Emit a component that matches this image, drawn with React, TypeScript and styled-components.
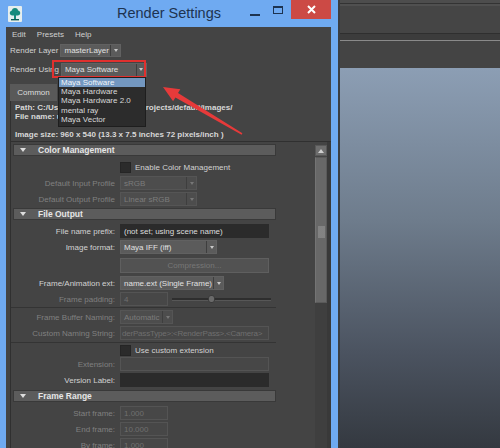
import React from "react";
import styled, { createGlobalStyle } from "styled-components";

const GlobalStyle = createGlobalStyle`
  html, body {
    margin: 0;
    padding: 0;
    background: #3b3f45;
  }
  body {
    font-family: "Liberation Sans", Arial, sans-serif;
  }
  * {
    box-sizing: border-box;
  }
`;

const Root = styled.div`
  position: relative;
  display: flex;
  width: 500px;
  height: 448px;
  overflow: hidden;
`;

/* ---------- window chrome ---------- */

const Window = styled.div`
  flex: none;
  width: 338px;
  display: flex;
  flex-direction: column;
  background: #6faaf1;
`;

const TitleBar = styled.div`
  height: 27px;
  flex: none;
  display: grid;
  grid-template-columns: 1fr auto 1fr;
  align-items: start;
`;

const AppIcon = styled.div`
  padding: 6px 0 0 8px;
  display: flex;
`;

const Title = styled.div`
  font-size: 14.5px;
  line-height: 26px;
  color: #1d3350;
  white-space: nowrap;
`;

const Controls = styled.div`
  display: flex;
  justify-content: flex-end;
  align-items: flex-start;
  padding-right: 7px;
`;

const MinBtn = styled.div`
  width: 10px;
  height: 2px;
  margin-top: 14px;
  background: #1d3350;
`;

const MaxBtn = styled.div`
  width: 10px;
  height: 8px;
  margin: 6px 0 0 13px;
  border: 1px solid #1d3350;
  border-top-width: 2px;
`;

const CloseBtn = styled.div`
  width: 40px;
  height: 19px;
  margin-left: 8px;
  background: #cc4a45;
  display: flex;
  align-items: center;
  justify-content: center;
`;

const Frame = styled.div`
  flex: 1;
  display: flex;
  padding: 0 7px 0 6px;
  min-height: 0;
`;

const Body = styled.div`
  position: relative;
  flex: 1;
  display: flex;
  flex-direction: column;
  background: #444444;
  font-size: 8px;
  color: #d2d2d2;
`;

const MenuBar = styled.div`
  height: 14px;
  flex: none;
  display: flex;
  align-items: center;
  gap: 11px;
  padding-left: 6px;
  color: #d0d0d0;
`;

const TopRow = styled.div<{ $h: number }>`
  position: relative;
  height: ${(p) => p.$h}px;
  flex: none;
  display: flex;
  align-items: center;
  gap: 2px;
  padding-left: 4px;
`;

const Highlight = styled.div`
  position: absolute;
  left: 46px;
  top: 1px;
  width: 94px;
  height: 18px;
  border: 2px solid #e0302e;
  pointer-events: none;
`;

const DropList = styled.div`
  position: absolute;
  left: 52px;
  top: 18px;
  width: 88px;
  padding: 0 0 2px;
  background: #2c2c2c;
  border: 1px solid #1e1e1e;
  z-index: 2;
`;

const DropItem = styled.div<{ $active?: boolean }>`
  height: 9.2px;
  line-height: 9.2px;
  padding-left: 2px;
  font-size: 8px;
  color: ${(p) => (p.$active ? "#f0f4f8" : "#d8d8d8")};
  background: ${(p) => (p.$active ? "#7397c0" : "transparent")};
  white-space: nowrap;
`;

const TabBar = styled.div`
  height: 21px;
  flex: none;
  display: flex;
  align-items: flex-end;
  padding-left: 4px;
`;

const Tab = styled.div`
  width: 47px;
  height: 17px;
  background: #595959;
  display: flex;
  align-items: center;
  justify-content: center;
  color: #dedede;
`;

const Info = styled.div`
  height: 40px;
  flex: none;
  margin-left: 4px;
  padding: 2px 0 0 4px;
  border-left: 1px solid #303030;
  font-weight: bold;
  color: #d8d8d8;
  white-space: nowrap;
`;

const InfoLine = styled.div<{ $gap?: number }>`
  line-height: 9px;
  margin-top: ${(p) => p.$gap ?? 0}px;
`;

/* ---------- scrolling attribute panel ---------- */

const ScrollPanel = styled.div`
  flex: 1;
  display: flex;
  margin-left: 4px;
  border-left: 1px solid #303030;
  border-top: 1px solid #303030;
  min-height: 0;
  overflow: hidden;
`;

const Content = styled.div`
  width: 265px;
  flex: none;
  padding: 2px 0 0 2px;
`;

const Spacer = styled.div`
  flex: 1;
`;

const Scrollbar = styled.div`
  width: 16px;
  flex: none;
  display: flex;
  flex-direction: column;
  padding-top: 3px;
  border-right: 4px solid #393939;
  background: #444;
`;

const ScrollUp = styled.div`
  height: 11px;
  background: #6e6e6e;
  border: 1px solid #585858;
  display: flex;
  align-items: center;
  justify-content: center;
`;

const ScrollThumb = styled.div`
  height: 146px;
  margin-top: 1px;
  background: #686868;
  border: 1px solid #5a5a5a;
  border-left-color: #747474;
  display: flex;
  align-items: flex-end;
  justify-content: center;
  padding-bottom: 64px;
`;

const Grip = styled.div`
  width: 7px;
  height: 12px;
  background-image: radial-gradient(#858585 0.7px, transparent 0.8px);
  background-size: 2px 2px;
`;

const ScrollTrack = styled.div`
  flex: 1;
  background: #3f3f3f;
`;

const Header = styled.div<{ $mt?: number }>`
  height: 12px;
  margin-top: ${(p) => p.$mt ?? 0}px;
  display: flex;
  align-items: center;
  background: #5c5c5c;
  border: 1px solid #393939;
  font-size: 8.5px;
  font-weight: bold;
  color: #e6e6e6;
`;

const HeaderCaret = styled.span`
  width: 0;
  height: 0;
  margin: 0 12px 0 6px;
  border-left: 3px solid transparent;
  border-right: 3px solid transparent;
  border-top: 4px solid #dedede;
`;

const Section = styled.div<{ $pb?: number }>`
  padding: 3px 0 ${(p) => p.$pb ?? 0}px;
`;

const Row = styled.div<{ $h?: number }>`
  height: ${(p) => p.$h ?? 16}px;
  display: grid;
  grid-template-columns: 102px 1fr;
  column-gap: 5px;
  align-items: center;
`;

const Label = styled.span<{ $dim?: boolean }>`
  text-align: right;
  white-space: nowrap;
  color: ${(p) => (p.$dim ? "#808080" : "#d2d2d2")};
`;

const Cell = styled.div`
  display: flex;
  align-items: center;
  gap: 4px;
  min-width: 0;
`;

const SelectBox = styled.div<{ $w: number; $off?: boolean; $h?: number }>`
  width: ${(p) => p.$w}px;
  height: ${(p) => p.$h ?? 14}px;
  flex: none;
  display: flex;
  background: ${(p) => (p.$off ? "#4d4d4d" : "#5b5b5b")};
  border: 1px solid ${(p) => (p.$off ? "#555" : "#616161")};
  color: ${(p) => (p.$off ? "#7c7c7c" : "#e0e0e0")};
`;

const SelectText = styled.span`
  flex: 1;
  padding-left: 3px;
  display: flex;
  align-items: center;
  white-space: nowrap;
  overflow: hidden;
`;

const SelectArrow = styled.span<{ $off?: boolean }>`
  width: 10px;
  flex: none;
  display: flex;
  align-items: center;
  justify-content: center;
  border-left: 1px solid #3e3e3e;
  &::after {
    content: "";
    border-left: 2.5px solid transparent;
    border-right: 2.5px solid transparent;
    border-top: 3px solid ${(p) => (p.$off ? "#777" : "#c8c8c8")};
  }
`;

const Field = styled.div<{ $w: number; $tone: "dark" | "off"; $tight?: boolean }>`
  width: ${(p) => p.$w}px;
  height: 14px;
  flex: none;
  padding-left: ${(p) => (p.$tight ? 1 : 3)}px;
  display: flex;
  align-items: center;
  white-space: nowrap;
  overflow: hidden;
  letter-spacing: ${(p) => (p.$tight ? "-0.2px" : "normal")};
  background: ${(p) => (p.$tone === "dark" ? "#2b2b2b" : "#474747")};
  border: 1px solid ${(p) => (p.$tone === "dark" ? "#2b2b2b" : "#545454")};
  color: ${(p) => (p.$tone === "dark" ? "#dcdcdc" : "#6f6f6f")};
`;

const PushButton = styled.div`
  width: 149px;
  height: 15px;
  display: flex;
  align-items: center;
  justify-content: center;
  background: #525252;
  border: 1px solid #5f5f5f;
  color: #777;
`;

const Check = styled.span`
  width: 11px;
  height: 11px;
  flex: none;
  background: #2b2b2b;
  border: 1px solid #252525;
`;

const Slider = styled.div`
  position: relative;
  width: 99px;
  height: 8px;
  display: flex;
  align-items: center;
  &::before {
    content: "";
    flex: 1;
    height: 2px;
    background: #2e2e2e;
    border-bottom: 1px solid #575757;
  }
`;

const Knob = styled.span`
  position: absolute;
  left: 36px;
  top: 0;
  width: 7px;
  height: 8px;
  border-radius: 3px;
  background: #6a6a6a;
  border: 1px solid #3a3a3a;
`;

const Divider = styled.div<{ $mt: number }>`
  height: 1px;
  margin: ${(p) => p.$mt}px 0 1px -3px;
  background: #343434;
`;

/* ---------- maya main window behind ---------- */

const MayaSide = styled.div`
  flex: 1;
  display: flex;
  flex-direction: column;
  border-left: 2px solid #3a3d42;
`;

const StatusLine = styled.div`
  height: 33px;
  flex: none;
  background: #454545;
  border-top: 3px solid #4d4d4d;
  box-shadow: inset 0 1px 0 #333, inset 0 3px 0 #505050;
`;

const ShelfTabs = styled.div`
  height: 8px;
  flex: none;
  background: #3c3c3c;
  border-top: 1px solid #2f2f2f;
  border-bottom: 1px solid #8a8a8a;
`;

const ShelfBody = styled.div`
  height: 27px;
  flex: none;
  background: #444;
`;

const Viewport = styled.div`
  flex: 1;
  background: linear-gradient(180deg, #8c9eb4 0%, #6e7c8c 40%, #4b5360 75%, #343940 100%);
`;

const Overlay = styled.svg`
  position: absolute;
  left: 0;
  top: 0;
  pointer-events: none;
`;

const Select = ({ w, text, off, h }: { w: number; text: string; off?: boolean; h?: number }) => (
  <SelectBox $w={w} $off={off} $h={h}>
    <SelectText>{text}</SelectText>
    <SelectArrow $off={off} />
  </SelectBox>
);

const SectionHeader = ({ title, mt }: { title: string; mt?: number }) => (
  <Header $mt={mt}>
    <HeaderCaret />
    {title}
  </Header>
);

const renderers = ["Maya Software", "Maya Hardware", "Maya Hardware 2.0", "mental ray", "Maya Vector"];

export default function App() {
  return (
    <Root>
      <GlobalStyle />
      <Window>
        <TitleBar>
          <AppIcon>
            <svg width="14" height="16" viewBox="0 0 14 16">
              <rect x="0" y="0" width="14" height="16" rx="1" fill="#e6eeee" />
              <path
                d="M7 2c2 0 3 1.3 3 2.6 1.5.3 2.4 1.4 2.2 2.8-.2 1.3-1.3 2-2.4 2H8v4H6v-4H4.2c-1.2 0-2.3-.8-2.4-2.1C1.7 6 2.6 4.9 4 4.6 4 3.2 5 2 7 2z"
                fill="#178a7c"
              />
              <rect x="3" y="13" width="8" height="1.4" fill="#0f5d55" />
            </svg>
          </AppIcon>
          <Title>Render Settings</Title>
          <Controls>
            <MinBtn />
            <MaxBtn />
            <CloseBtn>
              <svg width="9" height="9" viewBox="0 0 9 9">
                <path d="M1 1l7 7M8 1l-7 7" stroke="#fff" strokeWidth="2" />
              </svg>
            </CloseBtn>
          </Controls>
        </TitleBar>
        <Frame>
          <Body>
            <MenuBar>
              <span>Edit</span>
              <span>Presets</span>
              <span>Help</span>
            </MenuBar>
            <TopRow $h={18}>
              <Label>Render Layer</Label>
              <Select w={61} h={13} text="masterLayer" />
            </TopRow>
            <TopRow $h={21}>
              <Label>Render Using</Label>
              <Select w={86} h={14} text="Maya Software" />
              <Highlight />
              <DropList>
                {renderers.map((r, i) => (
                  <DropItem key={r} $active={i === 0}>
                    {r}
                  </DropItem>
                ))}
              </DropList>
            </TopRow>
            <TabBar>
              <Tab>Common</Tab>
            </TabBar>
            <Info>
              <InfoLine>Path: C:/Users/Documents/maya/projects/default/images/</InfoLine>
              <InfoLine>File name: untitled.iff</InfoLine>
              <InfoLine $gap={9}>Image size: 960 x 540 (13.3 x 7.5 inches 72 pixels/inch )</InfoLine>
            </Info>
            <ScrollPanel>
              <Content>
                <SectionHeader title="Color Management" />
                <Section $pb={1}>
                  <Row>
                    <span />
                    <Cell>
                      <Check />
                      <span>Enable Color Management</span>
                    </Cell>
                  </Row>
                  <Row>
                    <Label $dim>Default Input Profile</Label>
                    <Cell>
                      <Select w={77} off text="sRGB" />
                    </Cell>
                  </Row>
                  <Row>
                    <Label $dim>Default Output Profile</Label>
                    <Cell>
                      <Select w={77} off text="Linear sRGB" />
                    </Cell>
                  </Row>
                </Section>
                <SectionHeader title="File Output" />
                <Section $pb={2}>
                  <Row>
                    <Label>File name prefix:</Label>
                    <Cell>
                      <Field $w={149} $tone="dark">
                        (not set; using scene name)
                      </Field>
                    </Cell>
                  </Row>
                  <Row>
                    <Label>Image format:</Label>
                    <Cell>
                      <Select w={97} text="Maya IFF (iff)" />
                    </Cell>
                  </Row>
                  <Row $h={20}>
                    <span />
                    <Cell>
                      <PushButton>Compression...</PushButton>
                    </Cell>
                  </Row>
                  <Row>
                    <Label>Frame/Animation ext:</Label>
                    <Cell>
                      <Select w={104} text="name.ext (Single Frame)" />
                    </Cell>
                  </Row>
                  <Row>
                    <Label $dim>Frame padding:</Label>
                    <Cell>
                      <Field $w={48} $tone="off">
                        4
                      </Field>
                      <Slider>
                        <Knob />
                      </Slider>
                    </Cell>
                  </Row>
                  <Divider $mt={0} />
                  <Row>
                    <Label $dim>Frame Buffer Naming:</Label>
                    <Cell>
                      <Select w={53} off text="Automatic" />
                    </Cell>
                  </Row>
                  <Row>
                    <Label $dim>Custom Naming String:</Label>
                    <Cell>
                      <Field $w={149} $tone="off" $tight>
                        derPassType&gt;:&lt;RenderPass&gt;.&lt;Camera&gt;
                      </Field>
                    </Cell>
                  </Row>
                  <Divider $mt={1} />
                  <Row $h={12}>
                    <span />
                    <Cell>
                      <Check />
                      <span>Use custom extension</span>
                    </Cell>
                  </Row>
                  <Row>
                    <Label $dim>Extension:</Label>
                    <Cell>
                      <Field $w={149} $tone="off" />
                    </Cell>
                  </Row>
                  <Row>
                    <Label>Version Label:</Label>
                    <Cell>
                      <Field $w={149} $tone="dark" />
                    </Cell>
                  </Row>
                </Section>
                <SectionHeader title="Frame Range" />
                <Section>
                  <Row>
                    <Label $dim>Start frame:</Label>
                    <Cell>
                      <Field $w={48} $tone="off">
                        1.000
                      </Field>
                    </Cell>
                  </Row>
                  <Row>
                    <Label $dim>End frame:</Label>
                    <Cell>
                      <Field $w={48} $tone="off">
                        10.000
                      </Field>
                    </Cell>
                  </Row>
                  <Row>
                    <Label $dim>By frame:</Label>
                    <Cell>
                      <Field $w={48} $tone="off">
                        1.000
                      </Field>
                    </Cell>
                  </Row>
                </Section>
              </Content>
              <Spacer />
              <Scrollbar>
                <ScrollUp>
                  <svg width="6" height="4" viewBox="0 0 6 4">
                    <path d="M0 4L3 0l3 4z" fill="#cfcfcf" />
                  </svg>
                </ScrollUp>
                <ScrollThumb>
                  <Grip />
                </ScrollThumb>
                <ScrollTrack />
              </Scrollbar>
            </ScrollPanel>
          </Body>
        </Frame>
      </Window>
      <MayaSide>
        <StatusLine />
        <ShelfTabs />
        <ShelfBody />
        <Viewport />
      </MayaSide>
      <Overlay width="500" height="448" viewBox="0 0 500 448">
        <polygon
          points="163,87 180.3,89.2 178,93.1 242.4,133.3 241.6,134.7 175.4,97.4 173.1,101.2"
          fill="#e63a3a"
        />
      </Overlay>
    </Root>
  );
}
